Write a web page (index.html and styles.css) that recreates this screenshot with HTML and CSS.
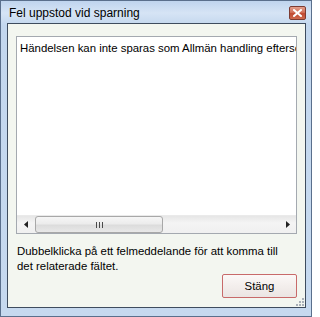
FILE: index.html
```html
<!DOCTYPE html>
<html>
<head>
<meta charset="utf-8">
<link rel="stylesheet" href="styles.css">
</head>
<body>
<div class="window">
  <div class="titlebar">
    <span class="title">Fel uppstod vid sparning</span>
    <span class="close"><svg width="9" height="8" viewBox="0 0 9 8"><path d="M1 1 L8 7 M8 1 L1 7" stroke="#fff" stroke-width="2" stroke-linecap="square"/></svg></span>
  </div>
  <div class="client">
    <div class="listbox">
      <div class="list-items">
        <div class="item">Händelsen kan inte sparas som Allmän handling eftersom det saknas uppgifter</div>
      </div>
      <div class="hscroll">
        <span class="arrow"><svg width="4" height="7" viewBox="0 0 4 7"><path d="M4 0 L0 3.5 L4 7 Z" fill="#222"/></svg></span>
        <div class="track">
          <div class="thumb"><span class="grip"></span><span class="grip"></span><span class="grip"></span></div>
        </div>
        <span class="arrow"><svg width="4" height="7" viewBox="0 0 4 7"><path d="M0 0 L4 3.5 L0 7 Z" fill="#222"/></svg></span>
      </div>
    </div>
    <p class="hint">Dubbelklicka på ett felmeddelande för att komma till det relaterade fältet.</p>
    <div class="actions">
      <button class="btn">Stäng</button>
    </div>
    <span class="grip-corner"><svg width="9" height="9" viewBox="0 0 9 9"><g fill="#a9b0b8"><rect x="7" y="1" width="2" height="2"/><rect x="4" y="4" width="2" height="2"/><rect x="7" y="4" width="2" height="2"/><rect x="1" y="7" width="2" height="2"/><rect x="4" y="7" width="2" height="2"/><rect x="7" y="7" width="2" height="2"/></g></svg></span>
  </div>
</div>
</body>
</html>
```
FILE: styles.css
```css
html, body {
  margin: 0;
  padding: 0;
  background: #fff;
}
.window {
  width: 312px;
  height: 317px;
  box-sizing: border-box;
  border: 1px solid #5a6f8c;
  padding: 0 5px 8px 6px;
  background: linear-gradient(to bottom, #bfd4ee 0px, #d6e4f5 12px, #c3d7ee 24px, #c6d9ef 100%);
  font-family: "Liberation Sans", Arial, sans-serif;
  font-size: 11.4px;
  color: #000;
  display: flex;
  flex-direction: column;
}
.titlebar {
  height: 23px;
  display: flex;
  align-items: center;
  justify-content: space-between;
}
.title {
  font-size: 12px;
  padding-left: 2px;
  margin-top: 1px;
  color: #000;
}
.close {
  width: 17px;
  height: 14px;
  box-sizing: border-box;
  border: 1px solid #7c3b32;
  border-radius: 2px;
  background: linear-gradient(to bottom, #e3a08e 0%, #d27059 45%, #c14a32 55%, #cf6a4e 100%);
  display: flex;
  align-items: center;
  justify-content: center;
  margin-top: 2px;
}
.client {
  flex: 1;
  border: 1px solid #3e4c5e;
  background: #f3f6f0;
  display: flex;
  flex-direction: column;
  padding: 12px 8px 9px 8px;
  position: relative;
}
.listbox {
  height: 198px;
  box-sizing: border-box;
  border: 1px solid #a4a9b0;
  background: #fff;
  display: flex;
  flex-direction: column;
}
.list-items {
  flex: 1;
  overflow: hidden;
  padding: 4px 0 0 3px;
}
.item {
  white-space: nowrap;
  line-height: 15px;
}
.hscroll {
  height: 17px;
  display: flex;
  align-items: stretch;
  background: linear-gradient(to bottom, #e6e6e6, #f4f4f4 40%, #f0f0f0);
  border-top: 1px solid #eaeaea;
}
.arrow {
  width: 17px;
  display: flex;
  align-items: center;
  justify-content: center;
}
.track {
  flex: 1;
  display: flex;
  align-items: stretch;
  padding: 0 1px;
}
.thumb {
  width: 128px;
  box-sizing: border-box;
  border: 1px solid #a8a8a8;
  border-radius: 3px;
  background: linear-gradient(to bottom, #f6f6f6 0%, #ececec 45%, #dcdcdc 55%, #e8e8e8 100%);
  display: flex;
  align-items: center;
  justify-content: center;
  gap: 2px;
}
.grip {
  width: 1px;
  height: 6px;
  background: #4a4a4a;
}
.hint {
  margin: 10px 0 0 1px;
  line-height: 15px;
  width: 268px;
}
.actions {
  margin-top: auto;
  display: flex;
  justify-content: flex-end;
}
.btn {
  width: 75px;
  height: 24px;
  box-sizing: border-box;
  border: 1px solid #c86a6a;
  border-radius: 2px;
  background: linear-gradient(to bottom, #fbf8f7 0%, #f3eeec 50%, #ebe5e3 100%);
  font-family: "Liberation Sans", Arial, sans-serif;
  font-size: 11.4px;
  color: #000;
  padding: 0;
}
.grip-corner {
  position: absolute;
  right: 1px;
  bottom: 1px;
  line-height: 0;
}
```
